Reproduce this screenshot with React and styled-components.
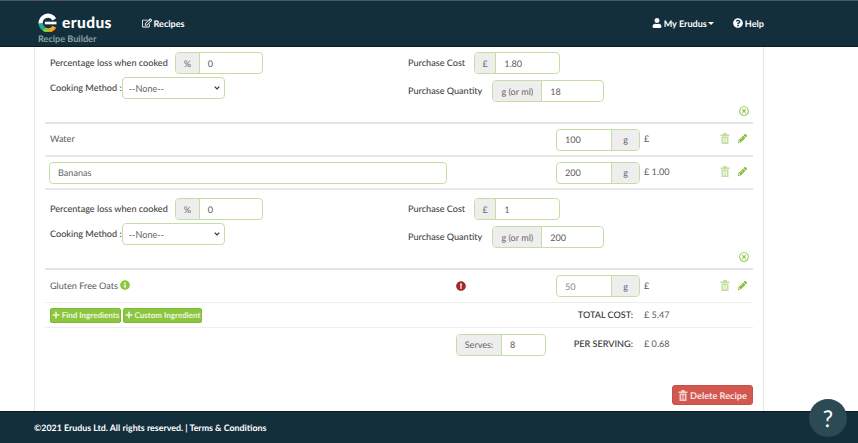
import React from "react";
import styled, { createGlobalStyle } from "styled-components";
import {
  FaRegEdit,
  FaUser,
  FaQuestionCircle,
  FaInfoCircle,
  FaExclamationCircle,
  FaPencilAlt,
  FaRegTimesCircle,
  FaPlus,
} from "react-icons/fa";

const GlobalStyle = createGlobalStyle`
  * { box-sizing: border-box; }
  html, body { margin: 0; height: 100%; overflow: hidden; }
  body {
    font-family: Lato, "Open Sans", sans-serif;
    font-size: 9.1px;
    color: #5a5a5a;
    background: #fff;
    text-rendering: geometricPrecision;
  }
  #root { height: 100%; }
`;

const Page = styled.div`
  height: 100vh;
  display: flex;
  flex-direction: column;
`;

const Header = styled.header`
  height: 47px;
  flex: none;
  background: #132f3b;
  border-top: 1px solid #4a5a62;
  border-bottom: 1px solid #0b1a20;
  display: flex;
  align-items: flex-start;
  padding: 0 94px 0 38px;
  color: #fff;
  font-weight: 700;
`;

const Brand = styled.div`
  width: 104px;
  padding-top: 11px;
`;

const LogoLine = styled.div`
  display: flex;
  align-items: center;
  gap: 5px;
  height: 21px;
`;

const LogoText = styled.span`
  font-size: 15.5px;
  font-weight: 900;
  letter-spacing: 0.4px;
  line-height: 20px;
`;

const Tagline = styled.div`
  font-size: 9.1px;
  line-height: 11px;
  color: #8fa1a8;
`;

const NavItem = styled.a`
  display: flex;
  align-items: center;
  gap: 1.5px;
  height: 44px;
  font-size: 9.1px;
  color: #fff;

  & svg {
    font-size: 10px;
  }
`;

const Spacer = styled.div`
  flex: 1;
`;

const NavRight = styled.nav`
  display: flex;
  gap: 19px;
`;

const Caret = styled.span`
  width: 0;
  height: 0;
  border-left: 3px solid transparent;
  border-right: 3px solid transparent;
  border-top: 3px solid #fff;
`;

const Main = styled.main`
  flex: 1;
  min-height: 0;
  width: 730px;
  margin-left: 34px;
  padding: 0 10px;
  border-left: 1px solid #e6e6e6;
  border-right: 1px solid #e6e6e6;
  display: flex;
  flex-direction: column;
`;

const Panel = styled.section`
  height: ${(p) => p.$height}px;
  flex: none;
  padding: ${(p) => p.$top}px 9px 0 5px;
  border-bottom: 2px solid #e4e4e4;
  position: relative;
`;

const PanelGrid = styled.div`
  display: grid;
  grid-template-columns: 358px 1fr;
`;

const FieldColumn = styled.div`
  display: flex;
  flex-direction: column;
  gap: ${(p) => p.$gap}px;
`;

const Field = styled.div`
  display: flex;
  align-items: center;
  gap: ${(p) => p.$gap}px;
`;

const Label = styled.label`
  color: #444;
  font-weight: 500;
  white-space: nowrap;
  padding-bottom: 2px;
`;

const CloseMark = styled.div`
  position: absolute;
  right: 4px;
  bottom: 6px;
  display: flex;
  color: #8cc63f;
  font-size: 10px;
`;

const InputGroup = styled.div`
  display: flex;
  width: ${(p) => p.$width}px;
  height: 22px;
  flex: none;
  border: 1.5px solid #c4dfa6;
  border-radius: 4px;
  overflow: hidden;
  background: #fff;
`;

const Addon = styled.span`
  flex: none;
  width: ${(p) => p.$width}px;
  display: flex;
  align-items: center;
  justify-content: center;
  background: #eee;
  color: #6a6a6a;
  border-${(p) => p.$side}: 1.5px solid #c4dfa6;
`;

const Value = styled.span`
  flex: 1;
  padding-left: 8px;
  display: flex;
  align-items: center;
  color: ${(p) => (p.$muted ? "#888" : "#5a5a5a")};
`;

const SelectBox = styled.select`
  width: 103px;
  height: 22px;
  padding: 0 6px;
  border: 1.5px solid #c4dfa6;
  border-radius: 4px;
  background: #fff url("data:image/svg+xml,%3Csvg xmlns='http://www.w3.org/2000/svg' width='6' height='4' viewBox='0 0 6 4'%3E%3Cpath d='M.7.7L3 3l2.3-2.3' fill='none' stroke='%23333' stroke-width='1.2'/%3E%3C/svg%3E") no-repeat right 4px center;
  appearance: none;
  color: #666;
  font: inherit;
  outline: none;
`;

const Row = styled.div`
  height: ${(p) => p.$height}px;
  flex: none;
  display: grid;
  grid-template-columns: 411px 100px 84px 1fr auto;
  align-items: center;
  border-bottom: ${(p) =>
    p.$plain ? "none" : p.$thick ? "2px solid #e8e8e8" : "1px solid #eee"};
`;

const NameCell = styled.div`
  padding: 0 0 2px 5px;
  display: flex;
  align-items: center;
  gap: 2px;
`;

const InputCell = styled.div`
  padding-left: 4px;
`;

const InfoIcon = styled(FaInfoCircle)`
  color: #8cc63f;
  font-size: 10px;
`;

const AlertCell = styled.div`
  display: flex;
  font-size: 10px;
  color: #a5282c;
  padding-bottom: 1px;
`;

const NameInput = styled.div`
  width: 398px;
  height: 22px;
  border: 1.5px solid #c4dfa6;
  border-radius: 4px;
  padding-left: 8px;
  display: flex;
  align-items: center;
  color: #666;
`;

const Cost = styled.div`
  padding: 0 0 2px 4px;
`;

const Actions = styled.div`
  display: flex;
  align-items: center;
  gap: 8px;
  padding: 0 6px 2px 0;
`;

const PencilIcon = styled(FaPencilAlt)`
  color: #7fbb2e;
  font-size: 9px;
`;

const ButtonCell = styled.div`
  grid-column: 1;
  display: flex;
  padding-left: 5px;
  gap: 2px;
`;

const AddButton = styled.button`
  display: flex;
  align-items: center;
  justify-content: center;
  gap: 2px;
  width: ${(p) => p.$width}px;
  height: 15px;
  padding: 0;
  border: 1px solid #82b83a;
  border-radius: 2px;
  background: #8cc63f;
  color: #eef7e0;
  font: 700 8px Lato, sans-serif;
  text-rendering: geometricPrecision;
  white-space: nowrap;
`;

const SummaryCell = styled.div`
  grid-column: 2 / 4;
  display: flex;
  align-items: center;
  justify-content: ${(p) => (p.$spread ? "space-between" : "flex-end")};
  padding-right: 7px;
`;

const SummaryLabel = styled.span`
  color: #333;
  font-weight: 500;
  white-space: nowrap;
  padding-bottom: 2px;
`;

const DeleteRow = styled.div`
  flex: none;
  display: flex;
  justify-content: flex-end;
  margin-top: 24px;
`;

const DeleteButton = styled.button`
  display: flex;
  align-items: center;
  justify-content: center;
  gap: 2px;
  width: 81px;
  height: 20px;
  padding: 0;
  border: 1px solid #c9504a;
  border-radius: 3px;
  background: #d2584f;
  color: #f8e3e0;
  font: 700 9.2px Lato, sans-serif;
  text-rendering: geometricPrecision;
  white-space: nowrap;
`;

const Footer = styled.footer`
  height: 32px;
  flex: none;
  background: #132f3b;
  border-top: 1px solid #0b1a20;
  display: flex;
  align-items: center;
  padding-left: 34px;
  color: #fff;
  font-weight: 700;
  font-size: 8.85px;
`;

const HelpBubble = styled.div`
  position: absolute;
  right: 11px;
  bottom: 6px;
  width: 38px;
  height: 38px;
  border-radius: 50%;
  background: #2c4a54;
  color: #fff;
  display: flex;
  align-items: center;
  justify-content: center;
  font-size: 23px;
`;

function Logo() {
  return (
    <svg width="19" height="19" viewBox="0 0 36 36">
      <path d="M5 20 A14 14 0 0 1 31 12" fill="none" stroke="#fff" strokeWidth="8" />
      <path d="M5 20 A14 14 0 0 0 11 30" fill="none" stroke="#2aa6a0" strokeWidth="8" />
      <path d="M11 30 A14 14 0 0 0 21 33" fill="none" stroke="#8cc63f" strokeWidth="8" />
      <path d="M21 33 A14 14 0 0 0 31 26" fill="none" stroke="#f5a623" strokeWidth="8" />
      <path d="M13 19 H35" stroke="#fff" strokeWidth="5" />
    </svg>
  );
}

function TrashIcon({ color = "#c2dfa0" }) {
  return (
    <svg width="10" height="11" viewBox="0 0 20 22" fill={color}>
      <path d="M7 0h6l1 3h5v3H1V3h5z" />
      <path d="M3 7h14v15H3zm3 3v9h1.5v-9zm3.2 0v9h1.6v-9zm3.3 0v9H14v-9z" fillRule="evenodd" />
    </svg>
  );
}

function Input({ unit, side = "left", unitWidth, width, value, muted }) {
  const addon = (
    <Addon $width={unitWidth} $side={side === "left" ? "right" : "left"}>
      {unit}
    </Addon>
  );
  return (
    <InputGroup $width={width}>
      {side === "left" && addon}
      <Value $muted={muted}>{value}</Value>
      {side === "right" && addon}
    </InputGroup>
  );
}

function CostPanel({ cost, quantity, height, top }) {
  return (
    <Panel $height={height} $top={top}>
      <PanelGrid>
        <FieldColumn $gap={3}>
          <Field $gap={7}>
            <Label>Percentage loss when cooked</Label>
            <Input unit="%" unitWidth={24} width={88} value="0" />
          </Field>
          <Field $gap={0}>
            <Label>Cooking Method :</Label>
            <SelectBox defaultValue="none">
              <option value="none">--None--</option>
            </SelectBox>
          </Field>
        </FieldColumn>
        <FieldColumn $gap={6}>
          <Field $gap={9}>
            <Label>Purchase Cost</Label>
            <Input unit="£" unitWidth={21} width={86} value={cost} />
          </Field>
          <Field $gap={10}>
            <Label>Purchase Quantity</Label>
            <Input unit="g (or ml)" unitWidth={49} width={112} value={quantity} />
          </Field>
        </FieldColumn>
      </PanelGrid>
      <CloseMark>
        <FaRegTimesCircle />
      </CloseMark>
    </Panel>
  );
}

function Tools() {
  return (
    <Actions>
      <TrashIcon />
      <PencilIcon />
    </Actions>
  );
}

export default function App() {
  return (
    <Page>
      <GlobalStyle />
      <Header>
        <Brand>
          <LogoLine>
            <Logo />
            <LogoText>erudus</LogoText>
          </LogoLine>
          <Tagline>Recipe Builder</Tagline>
        </Brand>
        <NavItem>
          <FaRegEdit /> Recipes
        </NavItem>
        <Spacer />
        <NavRight>
          <NavItem>
            <FaUser /> My Erudus <Caret />
          </NavItem>
          <NavItem>
            <FaQuestionCircle /> Help
          </NavItem>
        </NavRight>
      </Header>
      <Main>
        <CostPanel cost="1.80" quantity="18" height={77} top={5} />
        <Row $height={33} $thick>
          <NameCell>Water</NameCell>
          <span />
          <Input unit="g" side="right" unitWidth={28} width={84} value="100" />
          <Cost>£</Cost>
          <Tools />
        </Row>
        <Row $height={33} $thick>
          <InputCell>
            <NameInput>Bananas</NameInput>
          </InputCell>
          <span />
          <Input unit="g" side="right" unitWidth={28} width={84} value="200" />
          <Cost>£ 1.00</Cost>
          <Tools />
        </Row>
        <CostPanel cost="1" quantity="200" height={80} top={8} />
        <Row $height={33}>
          <NameCell>
            Gluten Free Oats <InfoIcon />
          </NameCell>
          <AlertCell>
            <FaExclamationCircle />
          </AlertCell>
          <Input unit="g" side="right" unitWidth={28} width={84} value="50" muted />
          <Cost>£</Cost>
          <Tools />
        </Row>
        <Row $height={25}>
          <ButtonCell>
            <AddButton $width={71}>
              <FaPlus /> Find Ingredients
            </AddButton>
            <AddButton $width={79}>
              <FaPlus /> Custom Ingredient
            </AddButton>
          </ButtonCell>
          <SummaryCell>
            <SummaryLabel>TOTAL COST:</SummaryLabel>
          </SummaryCell>
          <Cost>£ 5.47</Cost>
        </Row>
        <Row $height={33} $plain>
          <SummaryCell $spread>
            <Input unit="Serves:" unitWidth={45} width={90} value="8" />
            <SummaryLabel>PER SERVING:</SummaryLabel>
          </SummaryCell>
          <Cost>£ 0.68</Cost>
        </Row>
        <DeleteRow>
          <DeleteButton>
            <TrashIcon color="#f5cfcb" /> Delete Recipe
          </DeleteButton>
        </DeleteRow>
      </Main>
      <Footer>©2021 Erudus Ltd. All rights reserved. | Terms &amp; Conditions</Footer>
      <HelpBubble>?</HelpBubble>
    </Page>
  );
}
